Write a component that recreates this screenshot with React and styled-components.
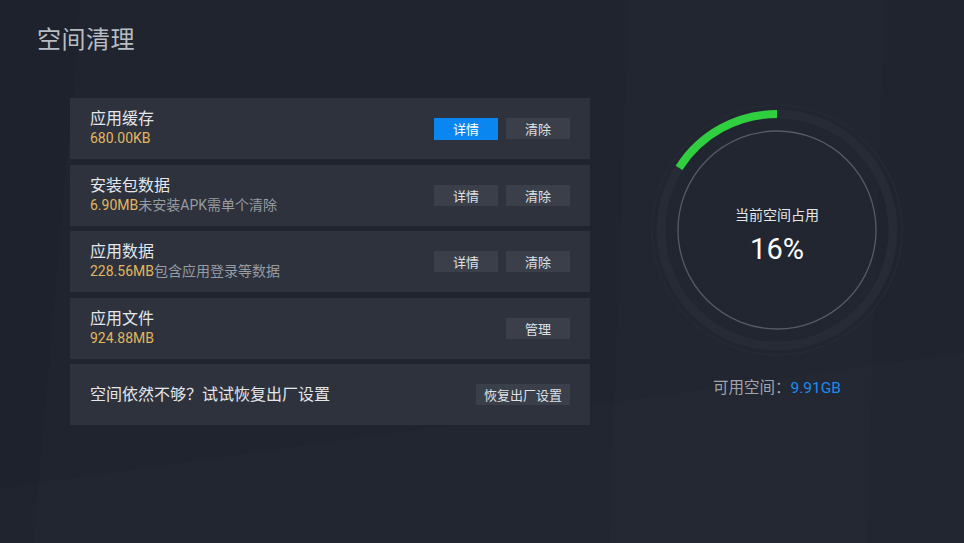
import React from "react";
import styled, { createGlobalStyle } from "styled-components";

const Global = createGlobalStyle`
  html, body { margin: 0; padding: 0; background: #1f242e; }
  body { font-family: Roboto, "Noto Sans CJK SC", sans-serif; }
`;

const Page = styled.div`
  width: 964px;
  height: 543px;
  box-sizing: border-box;
  padding: 26px 0 0 37px;
  overflow: hidden;
  background:
    linear-gradient(92deg, transparent 0 64%, rgba(255,255,255,0.006) 64% 90%, transparent 90%),
    linear-gradient(172deg, transparent 0 72%, rgba(255,255,255,0.008) 72% 100%),
    linear-gradient(95deg, rgba(0,0,0,0.05) 0 8%, transparent 8% 100%),
    #1f242e;
  font-family: Roboto, "Noto Sans CJK SC", sans-serif;
`;

const Title = styled.h1`
  margin: 0;
  font-size: 24px;
  line-height: 28px;
  font-weight: 400;
  color: #b8bcc4;
  letter-spacing: 0.5px;
`;

const Content = styled.div`
  display: flex;
  margin-top: 44px;
  margin-left: 33px;
`;

const List = styled.div`
  width: 520px;
  display: flex;
  flex-direction: column;
  gap: 5.5px;
`;

const Row = styled.div`
  height: 61px;
  background: #2d323d;
  display: flex;
  align-items: center;
  padding: 0 20px;
  gap: 8px;
`;

const Info = styled.div`
  flex: 1;
  display: flex;
  flex-direction: column;
`;

const RowTitle = styled.div`
  font-size: 16px;
  line-height: 20px;
  color: #e4e6ea;
`;

const Sub = styled.div`
  font-size: 14px;
  line-height: 19px;
  color: #979ba2;
`;

const Size = styled.span`
  color: #e2b65e;
`;

const Button = styled.div`
  height: ${(p) => (p.$active ? 22 : 21)}px;
  min-width: 64px;
  padding: 0 8px;
  box-sizing: border-box;
  display: flex;
  align-items: center;
  justify-content: center;
  font-size: 13px;
  color: ${(p) => (p.$active ? "#ffffff" : "#dfe1e5")};
  background: ${(p) => (p.$active ? "#0a86f0" : "#3a3f4a")};
`;

const Side = styled.div`
  flex: 1;
  display: flex;
  flex-direction: column;
  align-items: center;
  margin-top: 2px;
`;

const Gauge = styled.div`
  width: 260px;
  height: 260px;
  display: grid;
  & > * { grid-area: 1 / 1; }
`;

const Center = styled.div`
  display: flex;
  flex-direction: column;
  align-items: center;
  justify-content: center;
  padding-top: 12px;
  gap: 6px;
`;

const Label = styled.div`
  font-size: 14px;
  line-height: 20px;
  color: #e4e6ea;
`;

const Percent = styled.div`
  font-family: Roboto, sans-serif;
  font-size: 29px;
  line-height: 36px;
  color: #ffffff;
`;

const Free = styled.div`
  margin-top: 18px;
  font-size: 15.5px;
  line-height: 20px;
  color: #a0a4ab;
`;

const FreeValue = styled.span`
  color: #1a8cf0;
`;

const rows = [
  { title: "应用缓存", size: "680.00KB", note: "", buttons: ["详情", "清除"], active: 0 },
  { title: "安装包数据", size: "6.90MB", note: "未安装APK需单个清除", buttons: ["详情", "清除"] },
  { title: "应用数据", size: "228.56MB", note: "包含应用登录等数据", buttons: ["详情", "清除"] },
  { title: "应用文件", size: "924.88MB", note: "", buttons: ["管理"] },
];

const cx = 130, cy = 130, r = 116;
const ang = 0.16 * 2 * Math.PI;
const ex = cx - r * Math.sin(ang);
const ey = cy - r * Math.cos(ang);

export default function App() {
  return (
    <Page>
      <Global />
      <Title>空间清理</Title>
      <Content>
        <List>
          {rows.map((row) => (
            <Row key={row.title}>
              <Info>
                <RowTitle>{row.title}</RowTitle>
                <Sub>
                  <Size>{row.size}</Size>
                  {row.note}
                </Sub>
              </Info>
              {row.buttons.map((b, i) => (
                <Button key={b} $active={row.active === i}>{b}</Button>
              ))}
            </Row>
          ))}
          <Row>
            <Info>
              <RowTitle>空间依然不够？试试恢复出厂设置</RowTitle>
            </Info>
            <Button>恢复出厂设置</Button>
          </Row>
        </List>
        <Side>
          <Gauge>
            <svg width="260" height="260" viewBox="0 0 260 260">
              <circle cx={cx} cy={cy} r="125" fill="none" stroke="#252a34" strokeWidth="1.5" />
              <circle cx={cx} cy={cy} r={r} fill="none" stroke="#262b35" strokeWidth="9" />
              <circle cx={cx} cy={cy} r="99" fill="none" stroke="#565b64" strokeWidth="1.3" />
              <path
                d={`M ${cx} ${cy - r} A ${r} ${r} 0 0 0 ${ex} ${ey}`}
                fill="none"
                stroke="#2fcf3f"
                strokeWidth="8"
              />
            </svg>
            <Center>
              <Label>当前空间占用</Label>
              <Percent>16%</Percent>
            </Center>
          </Gauge>
          <Free>
            可用空间：<FreeValue>9.91GB</FreeValue>
          </Free>
        </Side>
      </Content>
    </Page>
  );
}
